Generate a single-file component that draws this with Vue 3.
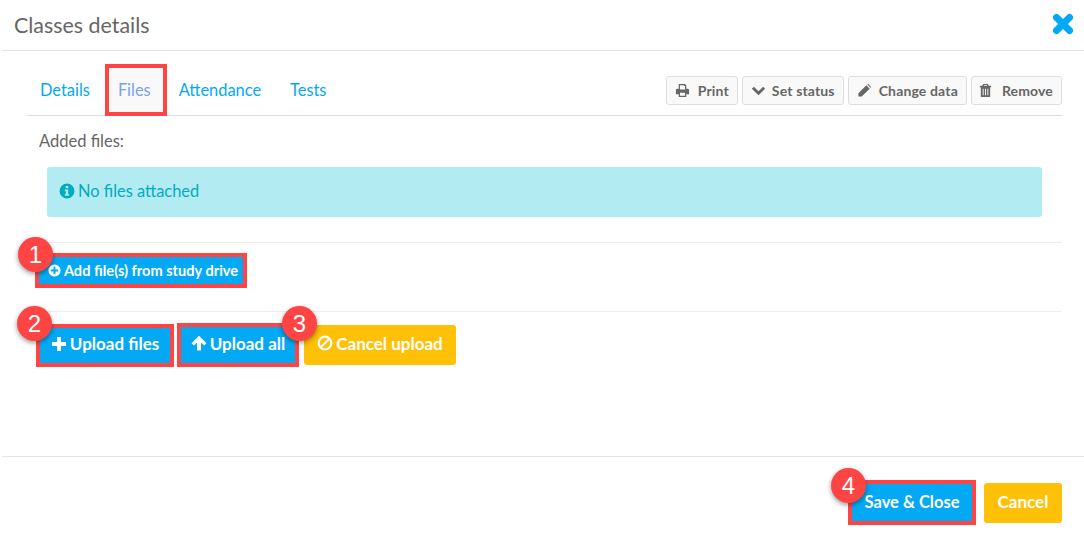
<script setup>
const tools = [
  { label: 'Print', icon: 'print' },
  { label: 'Set status', icon: 'chev' },
  { label: 'Change data', icon: 'pencil' },
  { label: 'Remove', icon: 'trash' },
]
</script>

<template>
  <div class="modal">
    <header class="head">
      <h1>Classes details</h1>
      <svg class="close" viewBox="0 0 22 22"><path d="M4.500 4.500 17.500 17.500M17.500 4.500 4.500 17.500" fill="none" stroke="#03a9f4" stroke-width="7" stroke-linecap="round"/></svg>
    </header>
    <main class="body">
      <div class="nav">
        <a class="tab t1">Details</a>
        <a class="tab active">Files</a>
        <a class="tab t3">Attendance</a>
        <a class="tab">Tests</a>
        <div class="tools">
          <button v-for="t in tools" :key="t.label" class="tool" :class="'t-' + t.icon">
            <svg v-if="t.icon === 'print'" class="ti" viewBox="0 0 16 16"><path fill="#666" d="M4 1h6.500L12 2.500V6h1.500A1.500 1.500 0 0 1 15 7.500V12h-3v3H4v-3H1V7.500A1.500 1.500 0 0 1 2.500 6H4V1Zm1.300 1.300V7h5.400V3.200H9.500V2.300H5.300ZM5.300 10.500v3.200h5.400v-3.200H5.300Z"/></svg>
            <svg v-else-if="t.icon === 'chev'" class="ti" viewBox="0 0 16 16"><path fill="none" stroke="#666" stroke-width="3" d="M2 5 8 11 14 5"/></svg>
            <svg v-else-if="t.icon === 'pencil'" class="ti" viewBox="0 0 16 16"><path fill="#666" d="M1.500 11 10 2.500l3.500 3.500L5 14.500H1.500V11ZM11 1.500l.8-.6 3.300 3.300-.6.800-3.500-3.500Z"/></svg>
            <svg v-else class="ti" viewBox="0 0 16 16"><path fill="#666" d="M5.500 1h5l1 2H14v1.500h-1V15H3V4.500H2V3h2.500l1-2Zm.6 2h3.800l-.4-.8H6.500L6.100 3ZM5 6v7h1V6H5Zm2.500 0v7h1V6h-1ZM10 6v7h1V6h-1Z"/></svg>
            <span>{{ t.label }}</span>
          </button>
        </div>
      </div>
      <p class="added">Added files:</p>
      <div class="alert">
        <svg class="ic16" viewBox="0 0 16 16"><path fill="#00acc1" fill-rule="evenodd" d="M8 .5a7.500 7.500 0 1 1 0 15 7.500 7.500 0 0 1 0-15ZM6.700 3v2.200h2.600V3H6.700ZM5.800 6.500v1.500h1v3.200h-1V12.800h4.400V11.200h-1V6.500H5.800Z"/></svg>
        <span>No files attached</span>
      </div>
      <div class="row drive">
        <button class="btn blue small marked">
          <svg class="ic14" viewBox="0 0 16 16"><path fill="#fff" fill-rule="evenodd" d="M8 .5a7.500 7.500 0 1 1 0 15 7.500 7.500 0 0 1 0-15ZM6.800 3.500v3.300H3.500v2.400h3.300v3.300h2.400V9.200h3.300V6.800H9.200V3.500H6.800Z"/></svg>
          Add file(s) from study drive
          <b class="badge b1">1</b>
        </button>
      </div>
      <div class="row uploads">
        <button class="btn blue marked up1">
          <svg class="ic15" viewBox="0 0 16 16"><path fill="#fff" d="M6 1h4v5h5v4h-5v5H6v-5H1V6h5V1Z"/></svg>
          Upload files
          <b class="badge b2">2</b>
        </button>
        <button class="btn blue marked up2">
          <svg class="ic15" viewBox="0 0 16 16"><path fill="#fff" d="M8 .8 15.500 8.300 13.200 10.600 10 7.400V15.500H6V7.400L2.800 10.600.5 8.300 8 .8Z"/></svg>
          Upload all
          <b class="badge b3">3</b>
        </button>
        <button class="btn yellow up3">
          <svg class="ic15" viewBox="0 0 16 16"><circle cx="8" cy="8" r="6.300" fill="none" stroke="#fff" stroke-width="2.200"/><path stroke="#fff" stroke-width="2.200" d="M3.500 12.500l9-9"/></svg>
          Cancel upload
        </button>
      </div>
    </main>
    <footer class="foot">
      <button class="btn blue marked save">Save &amp; Close<b class="badge b4">4</b></button>
      <button class="btn yellow cancel">Cancel</button>
    </footer>
  </div>
</template>

<style>
html, body { background: #fff; }
</style>

<style scoped>
.modal { width: 1084px; height: 534px; font-family: Lato, "Noto Sans", sans-serif; color: #666; box-sizing: border-box; padding-left: 2px; overflow: hidden; }
.head { height: 50px; border-bottom: 1px solid #e5e5e5; display: flex; align-items: center; justify-content: space-between; padding: 0 10px 0 12px; }
h1 { margin: 0; font-size: 21.4px; font-weight: 400; color: #666; }
.close { width: 22px; height: 22px; margin-top: -2px; }
.body { padding: 0 22px 0 25px; }
.nav { height: 64px; border-bottom: 1px solid #ddd; display: flex; align-items: flex-end; }
.tab { height: 52px; margin-bottom: -1px; display: flex; align-items: center; padding: 0 14px 2px; font-size: 16.4px; color: #03a9f4; box-sizing: border-box; }
.t1 { padding-left: 13px; padding-right: 15px; }
.t3 { padding-left: 12px; padding-right: 15px; }
.tab.active { color: #7a9ff0; background: #f9f9f9; outline: 4px solid #f44; outline-offset: -4px; padding-left: 13px; padding-right: 16px; }
.tools { margin-left: auto; display: flex; gap: 4px; align-self: flex-start; margin-top: 25px; }
.tool { height: 29px; display: flex; align-items: center; gap: 8px; padding: 0 8px; background: #f9f9f9; border: 1px solid #ddd; border-radius: 3px; font: 700 14px Lato, sans-serif; letter-spacing: .15px; color: #666; }
.t-chev { gap: 6px; }
.t-pencil { gap: 7px; }
.t-trash { gap: 7px; }
.t-trash .ti { transform: translateX(-2px); }
.ti { width: 15px; height: 15px; }
.added { margin: 0; font-size: 16.5px; padding: 15px 0 0 12px; line-height: 20px; }
.alert { margin: 16px 20px 0; height: 50px; background: #b2ebf2; color: #00acc1; border-radius: 3px; display: flex; align-items: center; gap: 3px; padding: 0 0 4px 12px; box-sizing: border-box; font-size: 16.4px; }
.alert .ic16 { margin-top: 2px; }
.ic16 { width: 16px; height: 16px; }
.ic14 { width: 13px; height: 13px; margin-right: 3px; }
.ic15 { width: 16px; height: 16px; margin-right: 3px; }
.row { border-top: 1px solid #eee; display: flex; }
.drive { margin-top: 25px; height: 69px; padding: 14px 0 0 12px; box-sizing: border-box; }
.uploads { padding: 13px 0 0 13px; align-items: flex-start; }
.btn { border: 0; border-radius: 3px; color: #fff; font: 700 17px Lato, sans-serif; display: flex; align-items: center; justify-content: center; position: relative; padding: 0 0 4px; box-sizing: border-box; }
.blue { background: #03a9f4; }
.yellow { background: #ffc107; }
.marked { outline: 4px solid #f44; border-radius: 0; }
.small { font-size: 14.6px; width: 204px; height: 27px; padding: 0 0 0 4px; }
.up1 { width: 130px; height: 35px; margin-top: 3px; }
.up2 { width: 114px; height: 36px; margin: 2px 0 0 11px; }
.up3 { width: 152px; height: 40px; margin-left: 9px; }
.foot { position: absolute; top: 456px; left: 2px; width: 1082px; height: 78px; border-top: 1px solid #e5e5e5; display: flex; justify-content: flex-end; gap: 12px; padding: 27px 22px 0 0; box-sizing: border-box; align-items: flex-start; }
.save { width: 120px; height: 37px; font-size: 16.5px; padding-bottom: 2px; }
.cancel { width: 78px; height: 40px; margin-top: -1px; }
.badge { position: absolute; z-index: 2; width: 35px; height: 35px; border-radius: 50%; background: #f44; color: #fff; font: 400 24px "Liberation Sans", sans-serif; letter-spacing: 0; display: flex; align-items: center; justify-content: center; box-shadow: 0 2px 5px rgba(0,0,0,.4); }
.b1 { left: -21px; top: -20px; }
.b2 { left: -23px; top: -22px; }
.b3 { right: -22px; top: -21px; }
.b4 { left: -21px; top: -16px; }
</style>
